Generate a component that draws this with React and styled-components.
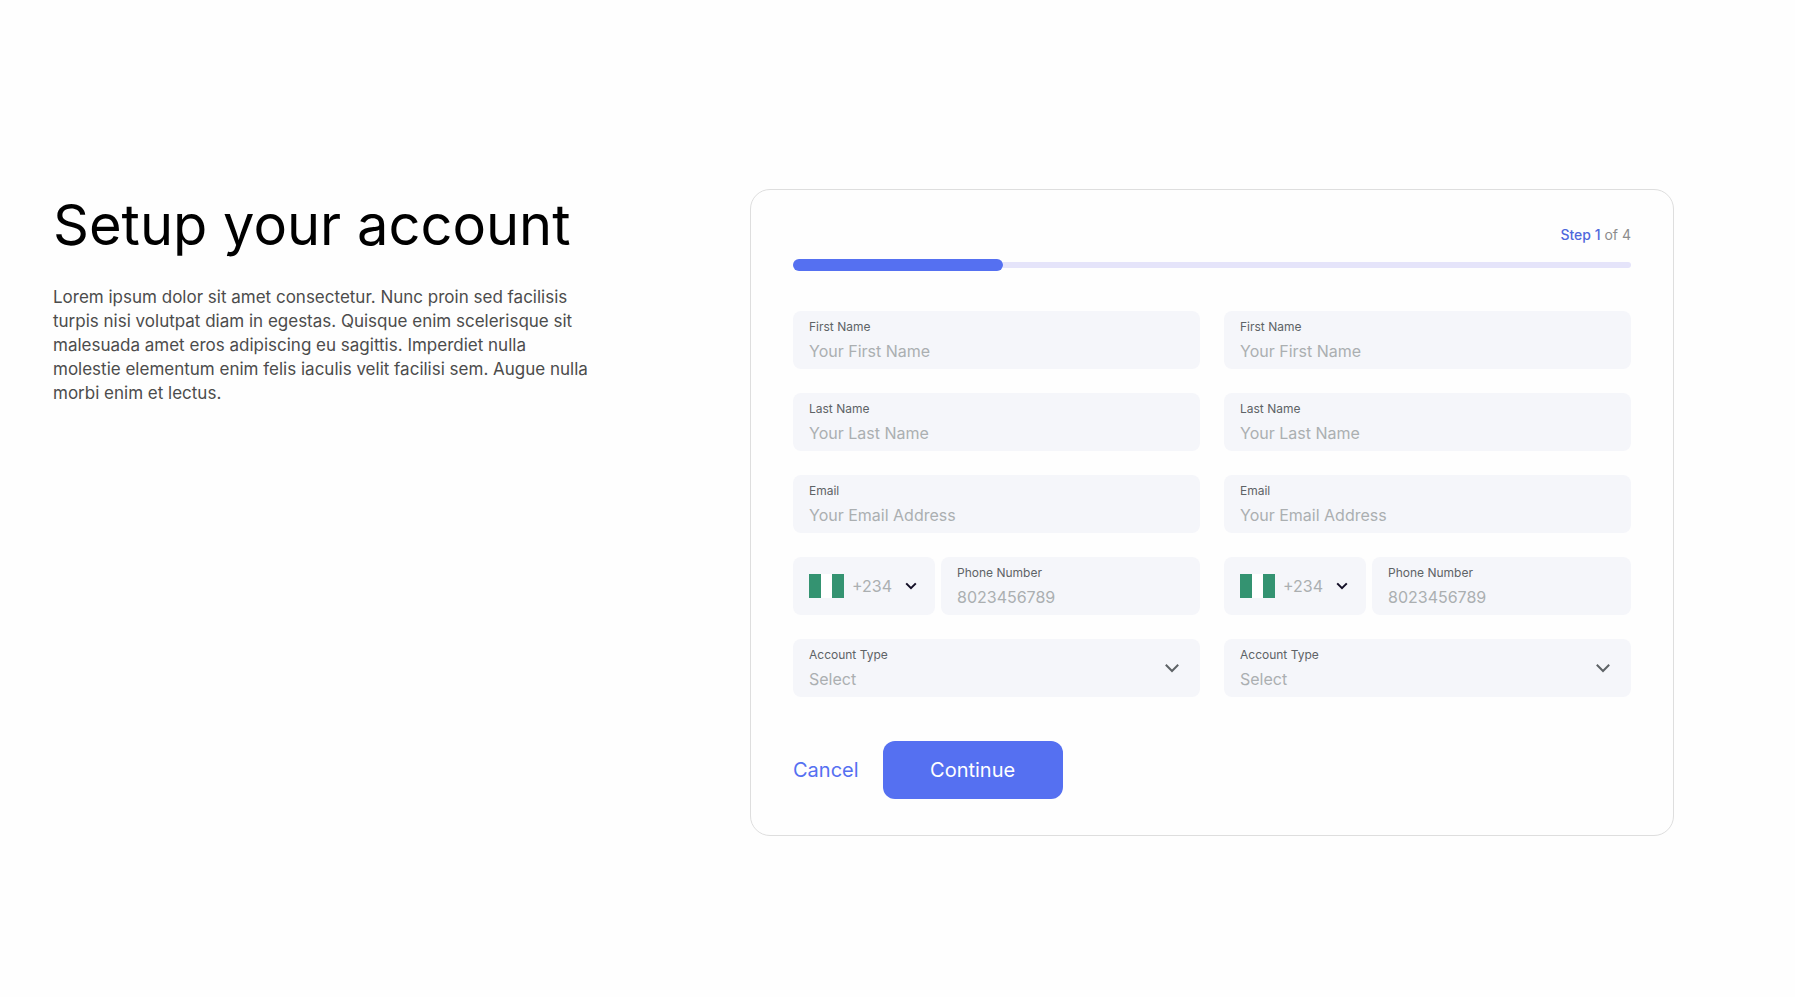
import styled, { createGlobalStyle } from 'styled-components';
import { useState } from 'react';

const GlobalStyle = createGlobalStyle`
    * {
        box-sizing: border-box;
    }
    body {
        margin: 0;
        background: #fefefe;
        font-family: Inter, 'Liberation Sans', sans-serif;
    }
    input, select, button {
        font-family: inherit;
    }
`;

const STEP = 1;
const TOTAL_STEPS = 4;

function TextField ({ label, ...rest }) {
    return (
        <Field>
            <FieldLabel>{label}</FieldLabel>
            <Input {...rest} />
        </Field>
    )
}

function Flag () {
    return (
        <FlagIcon viewBox="0 0 35 24" aria-hidden="true">
            <rect width="35" height="24" fill="#fff" />
            <rect width="12" height="24" fill="#349371" />
            <rect x="23" width="12" height="24" fill="#349371" />
        </FlagIcon>
    )
}

function AccountColumn () {
    const [code, setCode] = useState('+234')
    const [type, setType] = useState('')

    return (
        <Column>
            <TextField label="First Name" type="text" placeholder="Your First Name" />
            <TextField label="Last Name" type="text" placeholder="Your Last Name" />
            <TextField label="Email" type="email" placeholder="Your Email Address" />
            <PhoneRow>
                <CountryField>
                    <Flag />
                    <CodeSelect
                        aria-label="Country code"
                        value={code}
                        onChange={e => setCode(e.target.value)}
                    >
                        <option value="+234">+234</option>
                    </CodeSelect>
                    <CodeChevron viewBox="0 0 12 8" aria-hidden="true">
                        <path d="M1.2 1.4 6 6.2l4.8-4.8" />
                    </CodeChevron>
                </CountryField>
                <TextField label="Phone Number" type="tel" placeholder="8023456789" />
            </PhoneRow>
            <Field>
                <FieldLabel>Account Type</FieldLabel>
                <Select value={type} onChange={e => setType(e.target.value)}>
                    <option value="">Select</option>
                    <option value="personal">Personal</option>
                    <option value="business">Business</option>
                </Select>
                <TypeChevron viewBox="0 0 16 10" aria-hidden="true">
                    <path d="M1.8 1.8 8 8l6.2-6.2" />
                </TypeChevron>
            </Field>
        </Column>
    )
}

function App () {
    const handleSubmit = (e) => {
        e.preventDefault();
    }

    return (
        <Page>
            <GlobalStyle />
            <Intro>
                <Title>Setup your account</Title>
                <Description>
                    Lorem ipsum dolor sit amet consectetur. Nunc proin sed facilisis turpis nisi
                    volutpat diam in egestas. Quisque enim scelerisque sit malesuada amet eros
                    adipiscing eu sagittis. Imperdiet nulla molestie elementum enim felis iaculis
                    velit facilisi sem. Augue nulla morbi enim et lectus.
                </Description>
            </Intro>
            <Card onSubmit={handleSubmit}>
                <StepText><strong>Step {STEP}</strong> of {TOTAL_STEPS}</StepText>
                <Progress>
                    <ProgressFill style={{ width: `${(STEP / TOTAL_STEPS) * 100}%` }} />
                    <ProgressRest />
                </Progress>
                <Columns>
                    <AccountColumn />
                    <AccountColumn />
                </Columns>
                <Actions>
                    <CancelButton type="button">Cancel</CancelButton>
                    <ContinueButton type="submit">Continue</ContinueButton>
                </Actions>
            </Card>
        </Page>
    )
}
export default App

const Page = styled.main`
    display: grid;
    grid-template-columns: 604fr 924fr;
    column-gap: 93px;
    align-items: start;
    min-height: 100vh;
    padding: 189px 121px 40px 53px;
`;

const Intro = styled.section`
    padding-top: 2px;
`;

const Title = styled.h1`
    margin: 0 0 26px;
    color: #000;
    font-size: 56px;
    font-weight: 400;
    line-height: 68px;
`;

const Description = styled.p`
    max-width: 540px;
    margin: 0;
    color: #4c4c4c;
    font-size: 17px;
    line-height: 24px;
`;

const Card = styled.form`
    padding: 35px 42px 36px;
    border: 1px solid #dedede;
    border-radius: 20px;
`;

const StepText = styled.p`
    margin: 0;
    color: #8c8c8c;
    font-size: 14px;
    line-height: 20px;
    text-align: right;

    strong {
        color: #4f68dc;
        font-weight: 500;
    }
`;

const Progress = styled.div`
    display: flex;
    align-items: center;
    margin: 14px 0 40px;
`;

const ProgressFill = styled.div`
    height: 12px;
    border-radius: 6px;
    background: #5570f1;
`;

const ProgressRest = styled.div`
    flex: 1;
    height: 6px;
    border-radius: 0 3px 3px 0;
    background: #e5e4fa;
`;

const Columns = styled.div`
    display: grid;
    grid-template-columns: 1fr 1fr;
    gap: 24px;
`;

const Column = styled.div`
    display: flex;
    flex-direction: column;
    gap: 24px;
`;

const Field = styled.label`
    position: relative;
    display: flex;
    flex: 1;
    flex-direction: column;
    gap: 4px;
    min-width: 0;
    padding: 8px 16px 6px;
    border-radius: 8px;
    background: #f5f6fa;
`;

const FieldLabel = styled.span`
    color: #5e6366;
    font-size: 12px;
    line-height: 16px;
`;

const Input = styled.input`
    width: 100%;
    height: 24px;
    padding: 0;
    border: 0;
    outline: 0;
    background: transparent;
    color: #4c4c4c;
    font-size: 16px;
    line-height: 24px;

    &::placeholder {
        color: #abafb1;
        opacity: 1;
    }
`;

const Select = styled.select`
    appearance: none;
    width: 100%;
    height: 24px;
    padding: 0;
    border: 0;
    outline: 0;
    background: transparent;
    color: #abafb1;
    font-size: 16px;
    line-height: 24px;
`;

const TypeChevron = styled.svg`
    position: absolute;
    top: 24px;
    right: 20px;
    width: 16px;
    height: 10px;
    fill: none;
    stroke: #5e6366;
    stroke-width: 2;
    pointer-events: none;
`;

const PhoneRow = styled.div`
    display: flex;
    gap: 6px;
`;

const CountryField = styled.div`
    position: relative;
    display: flex;
    align-items: center;
    gap: 8px;
    width: 142px;
    padding-left: 16px;
    border-radius: 8px;
    background: #f5f6fa;
`;

const FlagIcon = styled.svg`
    flex: none;
    width: 35px;
    height: 24px;
`;

const CodeSelect = styled(Select)`
    flex: 1;
    min-width: 0;
`;

const CodeChevron = styled.svg`
    position: absolute;
    top: 25px;
    right: 18px;
    width: 12px;
    height: 8px;
    fill: none;
    stroke: #130f26;
    stroke-width: 2;
    pointer-events: none;
`;

const Actions = styled.div`
    display: flex;
    align-items: center;
    gap: 24px;
    margin-top: 44px;
`;

const CancelButton = styled.button`
    padding: 0;
    border: 0;
    background: none;
    color: #5570f1;
    font-size: 20px;
    line-height: 24px;
    cursor: pointer;
`;

const ContinueButton = styled.button`
    width: 180px;
    height: 58px;
    border: 0;
    border-radius: 12px;
    background: #5570f1;
    color: #fff;
    font-size: 20px;
    line-height: 24px;
    cursor: pointer;
`;
